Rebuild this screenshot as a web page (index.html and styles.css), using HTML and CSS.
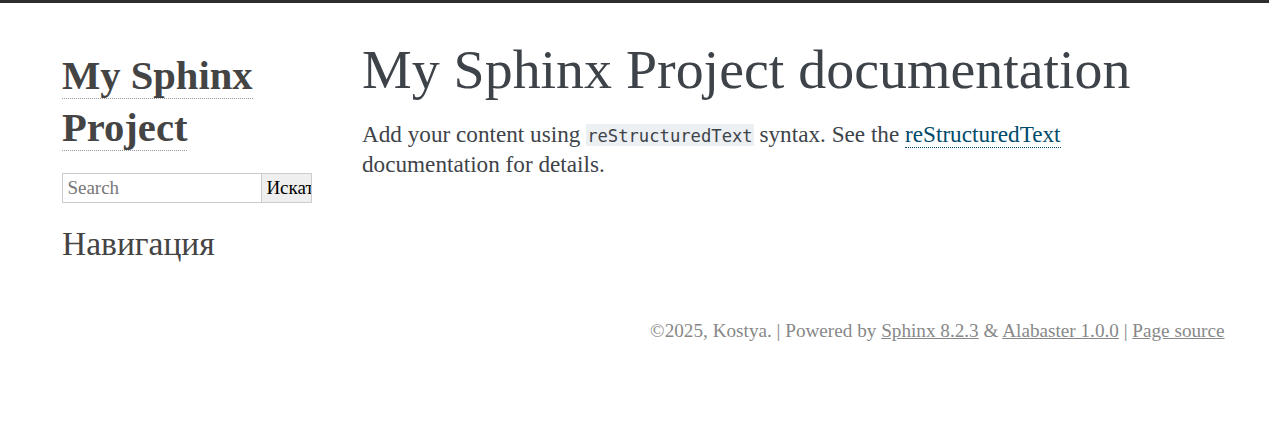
FILE: index.html
```html
<!DOCTYPE html>
<html lang="ru">
<head>
<meta charset="utf-8">
<title>My Sphinx Project documentation</title>
<link rel="stylesheet" href="styles.css">
</head>
<body>
<div class="document">
  <div class="sphinxsidebar">
    <h1 class="logo"><a href="#">My Sphinx Project</a></h1>
    <form class="search">
      <input type="text" class="search-input" placeholder="Search">
      <input type="submit" class="search-btn" value="Искать">
    </form>
    <h3 class="nav-title">Навигация</h3>
  </div>
  <div class="body">
    <h1 class="title">My Sphinx Project documentation</h1>
    <p class="text">Add your content using <code class="literal">reStructuredText</code> syntax. See the <a class="reference" href="#">reStructuredText</a> documentation for details.</p>
  </div>
</div>
<div class="footer">©2025, Kostya. | Powered by <a href="#">Sphinx 8.2.3</a> &amp; <a href="#">Alabaster 1.0.0</a> | <a href="#">Page source</a></div>
</body>
</html>
```
FILE: styles.css
```css
html, body {
  margin: 0;
  padding: 0;
  background: #fff;
}

body {
  border-top: 3px solid #2e2e2e;
  font-family: "Liberation Serif", serif;
  color: #000;
}

.document {
  display: flex;
  width: 1175px;
  margin: 37px 0 0 49.5px;
}

.sphinxsidebar {
  width: 250px;
  flex: none;
  padding: 22.5px 12.5px;
  font-size: 19px;
  line-height: 1.5;
}

.logo {
  margin: -13px 0 18.5px 0;
  font-size: 40.6px;
  line-height: 52.5px;
  font-weight: bold;
}

.logo a {
  color: #444;
  text-decoration: none;
  border-bottom: 1px dotted #999;
}

.search {
  display: flex;
  height: 30px;
  margin: 0;
}

.search-input {
  box-sizing: border-box;
  width: 200px;
  height: 30px;
  margin: 0;
  padding: 0 4.4px;
  border: 1px solid #ccc;
  border-radius: 0;
  background: #fff;
  font-family: "Liberation Serif", serif;
  font-size: 19px;
  color: #000;
  outline: none;
}

.search-input::placeholder {
  color: #777;
}

.search-btn {
  box-sizing: border-box;
  width: 50px;
  height: 30px;
  margin: 0;
  padding: 0 4.4px;
  border: 1px solid #ccc;
  border-left: none;
  border-radius: 0;
  background: #efefef;
  font-family: "Liberation Serif", serif;
  font-size: 19px;
  color: #000;
  text-align: left;
  overflow: hidden;
  white-space: nowrap;
}

.nav-title {
  margin: 18px 0 5px 0;
  font-size: 33.5px;
  line-height: 45px;
  font-weight: normal;
  color: #444;
}

.body {
  width: 825px;
  padding: 0 37.5px;
  color: #3e4349;
}

.title {
  margin: 0;
  font-size: 55.9px;
  line-height: 58px;
  font-weight: normal;
}

.text {
  margin: 21.5px 0;
  font-size: 23.2px;
  line-height: 28.7px;
}

.literal {
  font-family: "DejaVu Sans Mono", monospace;
  font-size: 17.2px;
  background: #ecf0f3;
  padding: 2px 1px 0.5px 1px;
}

.reference {
  color: #004b6b;
  text-decoration: none;
  border-bottom: 1px dotted #004b6b;
}

.footer {
  width: 1175px;
  margin: 27.5px 0 0 49.5px;
  font-size: 19.2px;
  line-height: 20px;
  color: #888;
  text-align: right;
}

.footer a {
  color: #888;
  text-decoration: underline;
}
```
